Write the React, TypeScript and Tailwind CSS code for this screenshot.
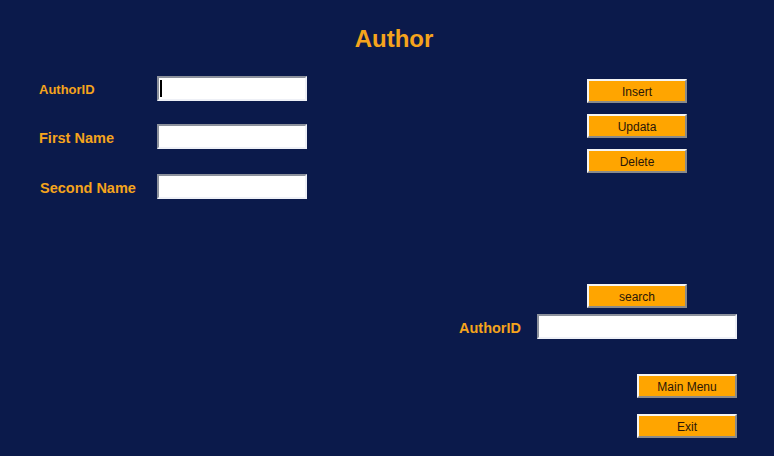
import React from "react";

const orange = "text-[#f5a41c]";

function Field({ width, caret = false }: { width: string; caret?: boolean }) {
  return (
    <div
      className={`${width} h-[25px] bg-white border-2 border-t-[#8c919c] border-l-[#8c919c] border-b-[#eef0f6] border-r-[#eef0f6] flex items-center`}
    >
      {caret && <div className="ml-[1px] w-[2px] h-[17px] bg-black" />}
    </div>
  );
}

function Button({ label }: { label: string }) {
  return (
    <button className="w-[100px] h-[24px] bg-[#ffa500] border-2 border-t-[#f4f4f4] border-l-[#f4f4f4] border-b-[#8a8a8a] border-r-[#8a8a8a] text-[12px] text-[#2a1608] flex items-center justify-center pt-[2px]">
      {label}
    </button>
  );
}

export default function App() {
  return (
    <div className="w-[774px] h-[456px] bg-[#0b1a4b] flex flex-col font-['Liberation_Sans',Arial,sans-serif] overflow-hidden">
      {/* Title */}
      <h1 className={`mt-[25px] text-center text-[24px] leading-[28px] font-bold ${orange} pl-[14px]`}>
        Author
      </h1>

      {/* Form + actions */}
      <div className="flex mt-[23px]">
        <div className="pl-[39px] flex flex-col">
          <div className="flex items-center h-[25px]">
            <span className={`w-[118px] text-[13px] font-bold ${orange} pt-[3px]`}>AuthorID</span>
            <Field width="w-[150px]" caret />
          </div>
          <div className="flex items-center h-[25px] mt-[23px]">
            <span className={`w-[118px] text-[14.5px] font-bold ${orange} pt-[5px]`}>First Name</span>
            <Field width="w-[150px]" />
          </div>
          <div className="flex items-center h-[25px] mt-[25px]">
            <span className={`w-[118px] pl-[1px] text-[14.5px] font-bold ${orange} pt-[5px]`}>Second Name</span>
            <Field width="w-[150px]" />
          </div>
        </div>

        <div className="ml-[280px] pt-[3px] flex flex-col gap-[11px]">
          <Button label="Insert" />
          <Button label="Updata" />
          <Button label="Delete" />
        </div>
      </div>

      {/* Search */}
      <div className="mt-[85px] ml-[587px]">
        <Button label="search" />
      </div>
      <div className="flex items-center h-[25px] mt-[6px] ml-[459px]">
        <span className={`w-[78px] text-[14.5px] font-bold ${orange} pt-[4px]`}>AuthorID</span>
        <Field width="w-[200px]" />
      </div>

      {/* Navigation */}
      <div className="mt-[35px] ml-[637px] flex flex-col gap-[16px]">
        <Button label="Main Menu" />
        <Button label="Exit" />
      </div>
    </div>
  );
}
